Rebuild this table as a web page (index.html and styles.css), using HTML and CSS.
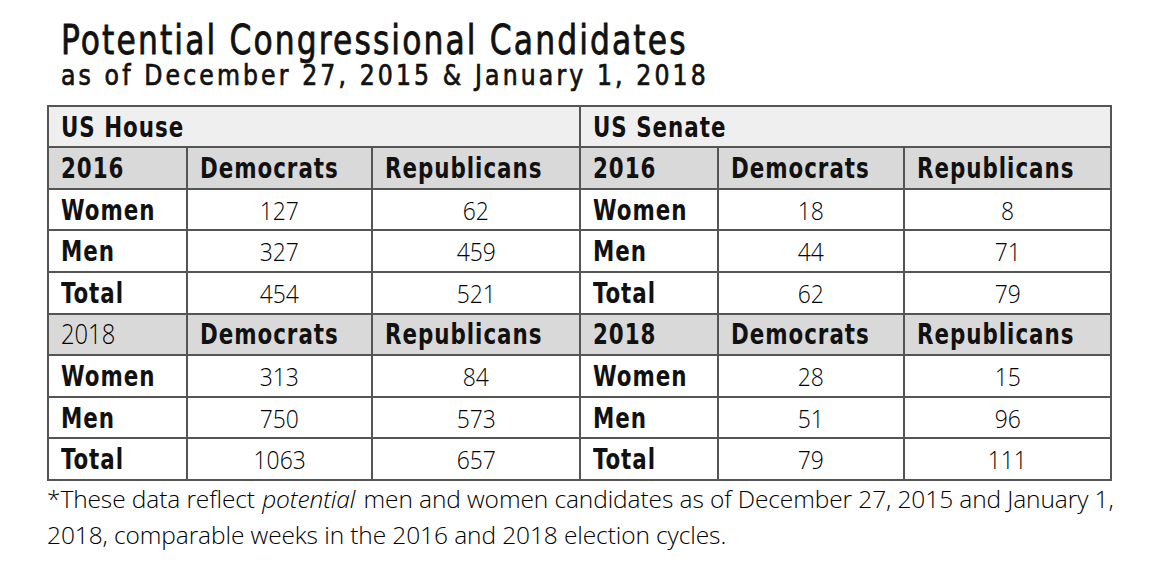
FILE: index.html
```html
<!DOCTYPE html>
<html>
<head>
<meta charset="utf-8">
<link rel="stylesheet" href="styles.css">
</head>
<body>
<div class="page">
  <h1 class="title">Potential Congressional Candidates</h1>
  <h2 class="subtitle">as of December 27, 2015 &amp; January 1, 2018</h2>
  <table class="data">
    <colgroup>
      <col class="c1"><col class="c2"><col class="c3"><col class="c4"><col class="c5"><col class="c6">
    </colgroup>
    <tr class="section">
      <td colspan="3" class="lbl"><span>US House</span></td>
      <td colspan="3" class="lbl"><span>US Senate</span></td>
    </tr>
    <tr class="year">
      <td class="lbl"><span>2016</span></td><td class="lbl"><span>Democrats</span></td><td class="lbl"><span>Republicans</span></td>
      <td class="lbl"><span>2016</span></td><td class="lbl"><span>Democrats</span></td><td class="lbl"><span>Republicans</span></td>
    </tr>
    <tr>
      <td class="lbl"><span>Women</span></td><td class="num"><span>127</span></td><td class="num"><span>62</span></td>
      <td class="lbl"><span>Women</span></td><td class="num"><span>18</span></td><td class="num"><span>8</span></td>
    </tr>
    <tr>
      <td class="lbl"><span>Men</span></td><td class="num"><span>327</span></td><td class="num"><span>459</span></td>
      <td class="lbl"><span>Men</span></td><td class="num"><span>44</span></td><td class="num"><span>71</span></td>
    </tr>
    <tr>
      <td class="lbl"><span>Total</span></td><td class="num"><span>454</span></td><td class="num"><span>521</span></td>
      <td class="lbl"><span>Total</span></td><td class="num"><span>62</span></td><td class="num"><span>79</span></td>
    </tr>
    <tr class="year">
      <td class="lbl light"><span>2018</span></td><td class="lbl"><span>Democrats</span></td><td class="lbl"><span>Republicans</span></td>
      <td class="lbl"><span>2018</span></td><td class="lbl"><span>Democrats</span></td><td class="lbl"><span>Republicans</span></td>
    </tr>
    <tr>
      <td class="lbl"><span>Women</span></td><td class="num"><span>313</span></td><td class="num"><span>84</span></td>
      <td class="lbl"><span>Women</span></td><td class="num"><span>28</span></td><td class="num"><span>15</span></td>
    </tr>
    <tr>
      <td class="lbl"><span>Men</span></td><td class="num"><span>750</span></td><td class="num"><span>573</span></td>
      <td class="lbl"><span>Men</span></td><td class="num"><span>51</span></td><td class="num"><span>96</span></td>
    </tr>
    <tr>
      <td class="lbl"><span>Total</span></td><td class="num"><span>1063</span></td><td class="num"><span>657</span></td>
      <td class="lbl"><span>Total</span></td><td class="num"><span>79</span></td><td class="num"><span>111</span></td>
    </tr>
  </table>
  <p class="note">*These data reflect <em class="emph">potential</em> men and women candidates as of December 27, 2015 and January 1, 2018, comparable weeks in the 2016 and 2018 election cycles.</p>
</div>
</body>
</html>
```

FILE: styles.css
```css
html, body {
  margin: 0;
  padding: 0;
  background: #fff;
}
.page {
  padding: 18px 0 0 47px;
  width: 1090px;
  color: #111;
}
.title {
  margin: 0 0 0 14px;
  font-family: "DejaVu Sans Condensed", "DejaVu Sans", sans-serif;
  font-size: 41px;
  font-weight: normal;
  line-height: 44px;
  letter-spacing: 2.5px;
  white-space: nowrap;
  transform: scaleX(0.85);
  transform-origin: left center;
  color: #111;
  -webkit-text-stroke: 0.8px #111;
}
.subtitle {
  margin: 0 0 14px 14px;
  font-family: "DejaVu Sans Condensed", "DejaVu Sans", sans-serif;
  font-size: 28.5px;
  font-weight: normal;
  line-height: 28.7px;
  letter-spacing: 3.4px;
  white-space: nowrap;
  transform: scaleX(0.92);
  transform-origin: left center;
  color: #111;
  -webkit-text-stroke: 0.7px #111;
}
.data {
  border-collapse: collapse;
  border: 2px solid #555;
  table-layout: fixed;
  width: 1063px;
}
.c1 { width: 139px; }
.c2 { width: 185px; }
.c3 { width: 208px; }
.c4 { width: 138px; }
.c5 { width: 186px; }
.c6 { width: 207px; }
.data tr { height: 41.6px; }
.data td {
  border: 2px solid #555;
  padding: 0 0 0 12px;
  white-space: nowrap;
  vertical-align: middle;
}
.data td span {
  display: inline-block;
}
.section td { background: #efefef; }
.year td { background: #d9d9d9; }
.lbl {
  font-family: "DejaVu Sans Condensed", "DejaVu Sans", sans-serif;
  font-weight: bold;
  font-size: 29px;
  line-height: 34px;
  letter-spacing: 1.2px;
  color: #111;
}
.lbl span {
  transform: scaleX(0.82);
  transform-origin: left center;
}
.lbl.light {
  font-family: "Open Sans", sans-serif;
  font-weight: 300;
  font-size: 27px;
  letter-spacing: 0;
  color: #000;
}
.lbl.light span {
  transform: scaleX(0.88);
}
.num {
  text-align: center;
  padding: 0 !important;
  font-family: "Open Sans", sans-serif;
  font-weight: 300;
  font-size: 26px;
  line-height: 34px;
  color: #000;
}
.num span {
  transform: scaleX(0.88);
  transform-origin: center center;
}
.note {
  margin: 0;
  font-family: "Open Sans", sans-serif;
  font-size: 24.5px;
  font-weight: 300;
  letter-spacing: -0.1px;
  line-height: 36px;
  width: 1085px;
  color: #000;
}
.emph {
  margin: 0 2px 0 1px;
}
```
